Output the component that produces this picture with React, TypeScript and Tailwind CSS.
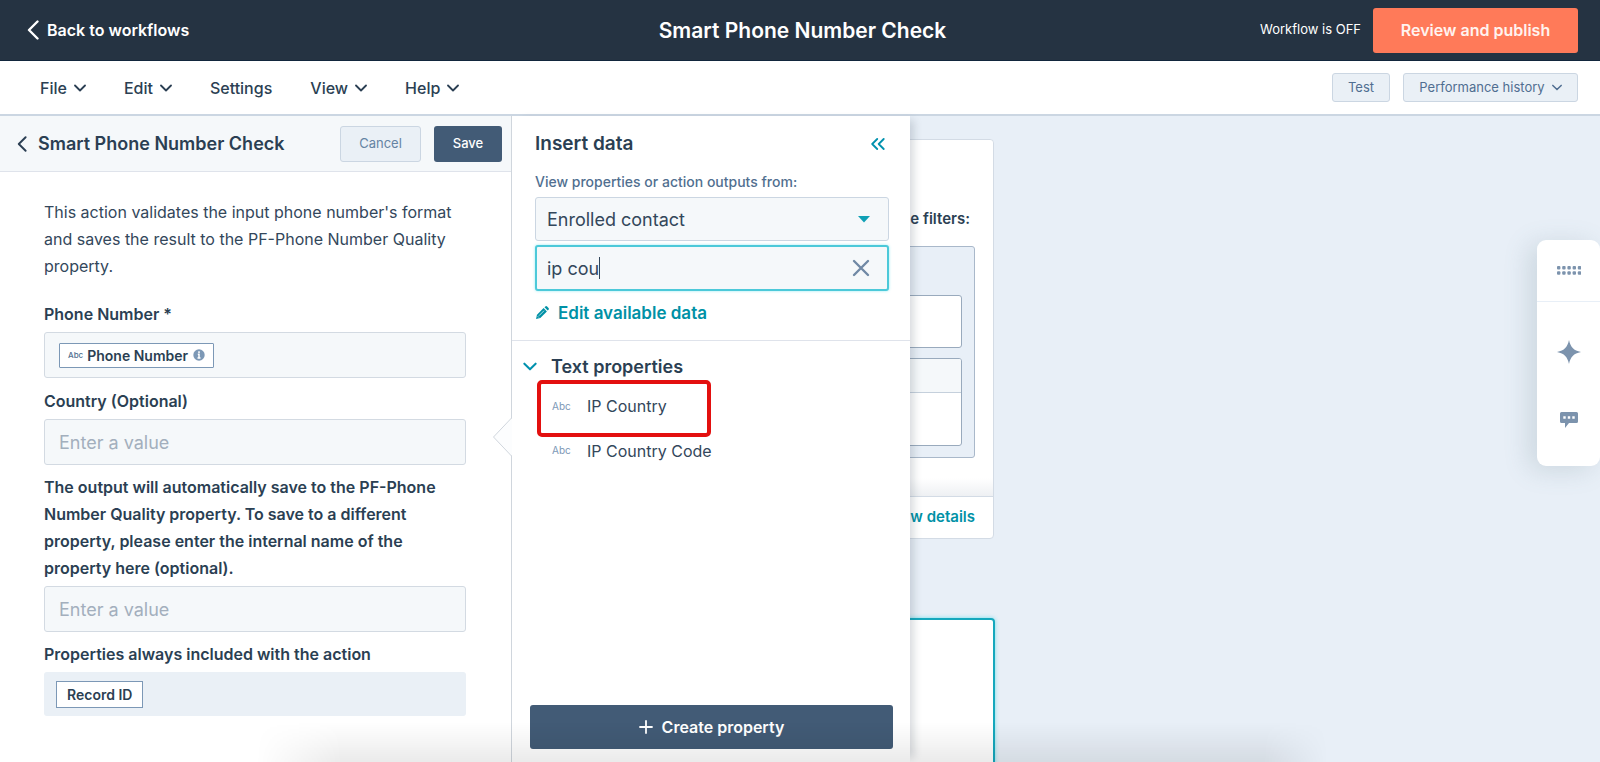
import React from "react";

const font = "font-['Inter','Noto_Sans',sans-serif]";

function Chevron({ className = "" }: { className?: string }) {
  return (
    <svg viewBox="0 0 12 8" className={className} fill="none" stroke="currentColor" strokeWidth="1.8" strokeLinecap="round" strokeLinejoin="round" aria-hidden="true">
      <path d="M1 1.5 6 6.5 11 1.5" />
    </svg>
  );
}

function Back({ className = "" }: { className?: string }) {
  return (
    <svg viewBox="0 0 12 20" className={className} fill="none" stroke="currentColor" strokeWidth="2.4" strokeLinecap="round" strokeLinejoin="round" aria-hidden="true">
      <path d="M10.5 1.5 2 10l8.500 8.500" />
    </svg>
  );
}

const menus = [
  { name: "File", drop: true },
  { name: "Edit", drop: true },
  { name: "Settings", drop: false },
  { name: "View", drop: true },
  { name: "Help", drop: true },
];

function Header() {
  return (
    <header className="grid h-[61px] shrink-0 grid-cols-[1fr_auto_1fr] items-center border-b border-[#12263d] bg-[#253342] pr-[22px] pl-[27px] text-white">
      <a href="#workflows" className="flex items-center gap-2 text-[16px] font-semibold">
        <Back className="h-5 w-3" />
        Back to workflows
      </a>
      <h1 className="pt-[2px] text-[21px] font-semibold">Smart Phone Number Check</h1>
      <div className="flex items-center justify-end gap-3">
        <span className="text-[13px]">Workflow is OFF</span>
        <button className="h-[45px] w-[205px] rounded-[3px] bg-[#ff7a59] text-[16px] font-semibold text-[#fff3ef]">Review and publish</button>
      </div>
    </header>
  );
}

function MenuBar() {
  return (
    <nav className="flex h-[55px] shrink-0 items-center border-b-2 border-[#cbd6e2] bg-white pr-[22px] pl-10">
      <div className="flex flex-1 items-center gap-[38px]">
        {menus.map((m) => (
          <button key={m.name} className="flex items-center gap-[7px] text-[16px] font-medium text-[#2b3f53]">
            {m.name}
            {m.drop && <Chevron className="h-2 w-3" />}
          </button>
        ))}
      </div>
      <div className="flex gap-[13px] text-[13px] text-[#506e91]">
        <button className="h-[29px] w-[58px] rounded-[3px] border border-[#cbd6e2] bg-[#eaf0f6]">Test</button>
        <button className="flex h-[29px] w-[175px] items-center justify-center gap-[7px] rounded-[3px] border border-[#cbd6e2] bg-[#eaf0f6]">
          Performance history
          <Chevron className="h-[7px] w-[10px]" />
        </button>
      </div>
    </nav>
  );
}

const fieldBox = "h-[46px] w-full rounded-[3px] border border-[#d3dae2] bg-[#f5f8fa]";
const label = "text-[16px] leading-[27px] font-semibold text-[#2b3f53]";

function ActionPanel() {
  return (
    <section className="relative flex w-[512px] shrink-0 flex-col border-r border-[#d0d6dd] bg-white">
      <div className="flex h-14 shrink-0 items-center border-b border-[#dfe3eb] bg-[#f5f8fa] pr-[9px] pl-[17px]">
        <button aria-label="Back" className="text-[#2b3f53]">
          <Back className="h-4 w-[10px]" />
        </button>
        <h2 className="ml-[11px] flex-1 text-[18px] font-semibold text-[#2b3f53]">Smart Phone Number Check</h2>
        <button className="h-9 w-[81px] rounded-[3px] border border-[#cbd6e2] bg-[#eaf0f6] text-[13px] text-[#6583a3]">Cancel</button>
        <button className="ml-[13px] h-9 w-[68px] rounded-[3px] bg-[#425b76] text-[13px] font-medium text-white">Save</button>
      </div>

      <form className="flex flex-col pt-[27px] pr-[45px] pl-11">
        <p className="text-[16px] leading-[27px] text-[#33475b]">This action validates the input phone number's format and saves the result to the PF-Phone Number Quality property.</p>

        <div className={`mt-[21px] ${label}`}>Phone Number *</div>
        <div className={`mt-1 flex items-center pl-[14px] ${fieldBox}`}>
          <button type="button" className="flex h-[25px] items-center rounded-[1px] border border-[#7c98b6] bg-white px-2 text-[14px] font-semibold text-[#2b3f53]">
            <span className="mr-1 text-[8px] font-medium text-[#516f90]">Abc</span>
            Phone Number
            <svg viewBox="0 0 12 12" className="ml-[5px] size-3" aria-hidden="true">
              <circle cx="6" cy="6" r="5.700" fill="#7c98b6" />
              <path d="M6 2.200v1.700M4.800 5.200H6v3.600M4.500 9h3" stroke="#fff" strokeWidth="1.500" fill="none" />
            </svg>
          </button>
        </div>

        <label htmlFor="country" className={`mt-[10px] ${label}`}>Country (Optional)</label>
        <input id="country" placeholder="Enter a value" className={`mt-1 px-[14px] text-[18px] text-[#33475b] placeholder:text-[#a3afbd] ${fieldBox}`} />

        <label htmlFor="target" className={`mt-[9px] ${label}`}>The output will automatically save to the PF-Phone Number Quality property. To save to a different property, please enter the internal name of the property here (optional).</label>
        <input id="target" placeholder="Enter a value" className={`mt-1 px-[14px] text-[18px] text-[#33475b] placeholder:text-[#a3afbd] ${fieldBox}`} />

        <div className={`mt-[9px] ${label}`}>Properties always included with the action</div>
        <div className="mt-1 flex h-11 items-center rounded-[3px] bg-[#eaf0f6] pl-3">
          <span className="flex h-[27px] items-center border border-[#7c98b6] bg-white px-[10px] text-[14px] font-semibold text-[#2b3f53]">Record ID</span>
        </div>
      </form>

      <svg viewBox="0 0 20 40" className="absolute top-[301px] -right-px z-20 h-10 w-5" aria-hidden="true">
        <path d="M20 1 1.500 20 20 39Z" fill="#fcfdfe" />
        <path d="M19.500 0v1L1.500 20l18 19v1" fill="none" stroke="#d0d6dd" />
      </svg>
    </section>
  );
}

function DataPanel() {
  return (
    <section className="relative z-10 flex w-[398px] shrink-0 flex-col bg-white shadow-[8px_0_8px_-4px_rgba(45,62,80,0.18)]">
      <div className="border-b border-[#dfe3eb] pr-[21px] pb-[15px] pl-[23px]">
        <div className="flex h-14 items-center justify-between pr-1">
          <h2 className="text-[19px] font-semibold text-[#2b3f53]">Insert data</h2>
          <button aria-label="Collapse" className="text-[#0091ae]">
            <svg viewBox="0 0 14 12" className="h-3 w-[14px]" fill="none" stroke="currentColor" strokeWidth="1.800" strokeLinecap="round" strokeLinejoin="round" aria-hidden="true">
              <path d="M6.200 1 1.200 6l5 5M12.700 1l-5 5 5 5" />
            </svg>
          </button>
        </div>
        <label htmlFor="source" className="block pb-[5px] text-[14px] leading-5 font-medium text-[#516f90]">View properties or action outputs from:</label>
        <div className="relative">
          <select id="source" className="h-11 w-full appearance-none rounded-[3px] border border-[#cbd6e2] bg-[#f5f8fa] px-[11px] text-[18px] text-[#33475b]">
            <option>Enrolled contact</option>
          </select>
          <svg viewBox="0 0 12 7" className="pointer-events-none absolute top-[19px] right-[19px] h-[7px] w-3" aria-hidden="true">
            <path d="M0 0h12L6 6.500Z" fill="#0fa0b5" />
          </svg>
        </div>
        <div className="mt-1 flex h-[46px] items-center rounded-[3px] border-2 border-[#4cc9d9] bg-[#f5f8fa] pr-[17px] pl-[10px] shadow-[0_0_3px_rgba(0,208,228,0.4)]">
          <input aria-label="Search properties" defaultValue="ip cou" className="[field-sizing:content] bg-transparent text-[18px] text-[#33475b] outline-none" />
          <span className="h-[22px] w-px bg-[#33475b]" />
          <button aria-label="Clear" className="ml-auto text-[#7089a5]">
            <svg viewBox="0 0 18 18" className="size-[18px]" fill="none" stroke="currentColor" strokeWidth="2.400" strokeLinecap="round" aria-hidden="true">
              <path d="M2 2l14 14M16 2 2 16" />
            </svg>
          </button>
        </div>
        <button className="mt-[10px] flex items-center gap-[9px] text-[17px] leading-6 font-semibold text-[#0091a6]">
          <svg viewBox="0 0 14 14" className="size-[14px]" aria-hidden="true">
            <path d="M1 13l1-4.300L8.600 2.100l3.300 3.300L5.300 12Z" fill="currentColor" />
            <path d="M9.500 1.300 10.300.5a1.300 1.300 0 0 1 1.800 0L13.500 1.900a1.300 1.300 0 0 1 0 1.800l-.8.8Z" fill="currentColor" />
            <path d="M4 9.700 9 4.700M2.700 10.300l1.200 1.200" stroke="#fff" strokeWidth=".7" />
          </svg>
          Edit available data
        </button>
      </div>

      <div className="flex-1 pt-3">
        <button className="flex items-center gap-[14px] pl-[11px] text-[18px] leading-[27px] font-semibold text-[#2b3f53]">
          <Chevron className="h-[9px] w-[14px] text-[#0091ae]" />
          Text properties
        </button>
        <ul className="pl-[25px] text-[16px] text-[#33475b]">
          <li className="h-[57px] w-[174px] rounded-[5px] border-4 border-[#e3100f]">
            <button className="flex h-11 items-center pl-[11px]">
              <span className="w-[35px] text-left text-[10px] text-[#7c98b6]">Abc</span>
              IP Country
            </button>
          </li>
          <li>
            <button className="flex h-[27px] items-center pl-[15px]">
              <span className="w-[35px] text-left text-[10px] text-[#7c98b6]">Abc</span>
              IP Country Code
            </button>
          </li>
        </ul>
      </div>

      <button className="mr-[17px] mb-[13px] ml-[18px] flex h-11 items-center justify-center gap-[9px] rounded-[3px] bg-[#425b76] text-[16px] font-semibold text-white">
        <svg viewBox="0 0 14 14" className="size-[14px]" fill="none" stroke="currentColor" strokeWidth="1.800" strokeLinecap="round" aria-hidden="true">
          <path d="M7 1v12M1 7h12" />
        </svg>
        Create property
      </button>
    </section>
  );
}

function Canvas() {
  return (
    <section className="relative flex flex-1 flex-col overflow-hidden bg-[#e8eff7]">
      <article className="absolute top-[23px] -left-[161px] flex h-[400px] w-[245px] flex-col rounded-[4px] border border-[#d3dbe5] bg-white">
        <div className="flex flex-1 flex-col items-end rounded-t-[4px] bg-gradient-to-b from-white from-95% to-[#eef0f3] pt-[67px] pr-[18px]">
          <p className="pr-[5px] text-[15px] leading-6 font-semibold text-[#2b3f53]">e filters:</p>
          <div className="mt-[15px] flex h-[212px] w-full flex-col gap-[10px] rounded-r-[3px] border border-[#a9b8ca] bg-[#e8eff7] pt-12 pr-3">
            <div className="h-[53px] rounded-[3px] border border-[#99aabd] bg-white" />
            <div className="h-[88px] overflow-hidden rounded-[3px] border border-[#99aabd] bg-white">
              <div className="h-[34px] border-b border-[#c5d0dc] bg-[#f5f8fa]" />
            </div>
          </div>
        </div>
        <div className="flex h-[42px] items-center justify-end border-t border-[#d3dbe5] pr-[18px]">
          <a href="#details" className="text-[15px] font-semibold text-[#0091a6]">w details</a>
        </div>
      </article>
      <article className="absolute top-[502px] -left-[161px] h-[260px] w-[246px] rounded-[4px] border-2 border-[#15a8bd] bg-white shadow-[0_0_4px_rgba(0,208,228,0.5)]" />

      <aside className="absolute top-[124px] right-0 flex w-[63px] flex-col rounded-[9px] bg-white text-[#7c93ad] shadow-[-8px_4px_26px_rgba(90,120,130,0.2)]">
        <button aria-label="Move toolbar" className="flex h-[62px] items-center justify-center border-b border-[#e8eff7]">
          <svg viewBox="0 0 24 9" className="h-[9px] w-6" fill="currentColor" aria-hidden="true">
            {[0, 5.2, 10.4, 15.6, 20.8].map((x) => (
              <React.Fragment key={x}>
                <rect x={x} y="0" width="3.400" height="3.600" rx="1" />
                <rect x={x} y="5.200" width="3.400" height="3.600" rx="1" />
              </React.Fragment>
            ))}
          </svg>
        </button>
        <button aria-label="Assistant" className="mt-[26px] flex h-12 items-center justify-center">
          <svg viewBox="0 0 24 24" className="size-6" fill="currentColor" aria-hidden="true">
            <path d="M12 0c1.500 7 4.500 10.500 12 12-7.500 1.500-10.500 5-12 12-1.500-7-4.500-10.500-12-12C7.500 10.500 10.500 7 12 0Z" />
          </svg>
        </button>
        <button aria-label="Comments" className="mt-5 mb-[22px] flex h-12 items-center justify-center">
          <svg viewBox="0 0 18 16" className="h-4 w-[18px]" aria-hidden="true">
            <path d="M1.500 0h15A1.500 1.500 0 0 1 18 1.500v8a1.500 1.500 0 0 1-1.500 1.500H9l-4 5v-5H1.500A1.500 1.500 0 0 1 0 9.500v-8A1.500 1.500 0 0 1 1.500 0Z" fill="currentColor" />
            <path d="M3.300 4.300h2.400v2.400H3.300ZM7.800 4.300h2.400v2.400H7.800ZM12.300 4.300h2.400v2.400h-2.400Z" fill="#fff" />
          </svg>
        </button>
      </aside>
    </section>
  );
}

export default function App() {
  return (
    <div className={`relative flex h-screen flex-col overflow-hidden bg-white ${font}`}>
      <Header />
      <MenuBar />
      <main className="flex min-h-0 flex-1">
        <ActionPanel />
        <DataPanel />
        <Canvas />
      </main>
      <div className="pointer-events-none absolute right-[17%] bottom-0 left-[16%] z-20 h-10 bg-gradient-to-t from-black/8 to-transparent [mask-image:linear-gradient(to_right,transparent,black_8%,black_94%,transparent)]" />
    </div>
  );
}
